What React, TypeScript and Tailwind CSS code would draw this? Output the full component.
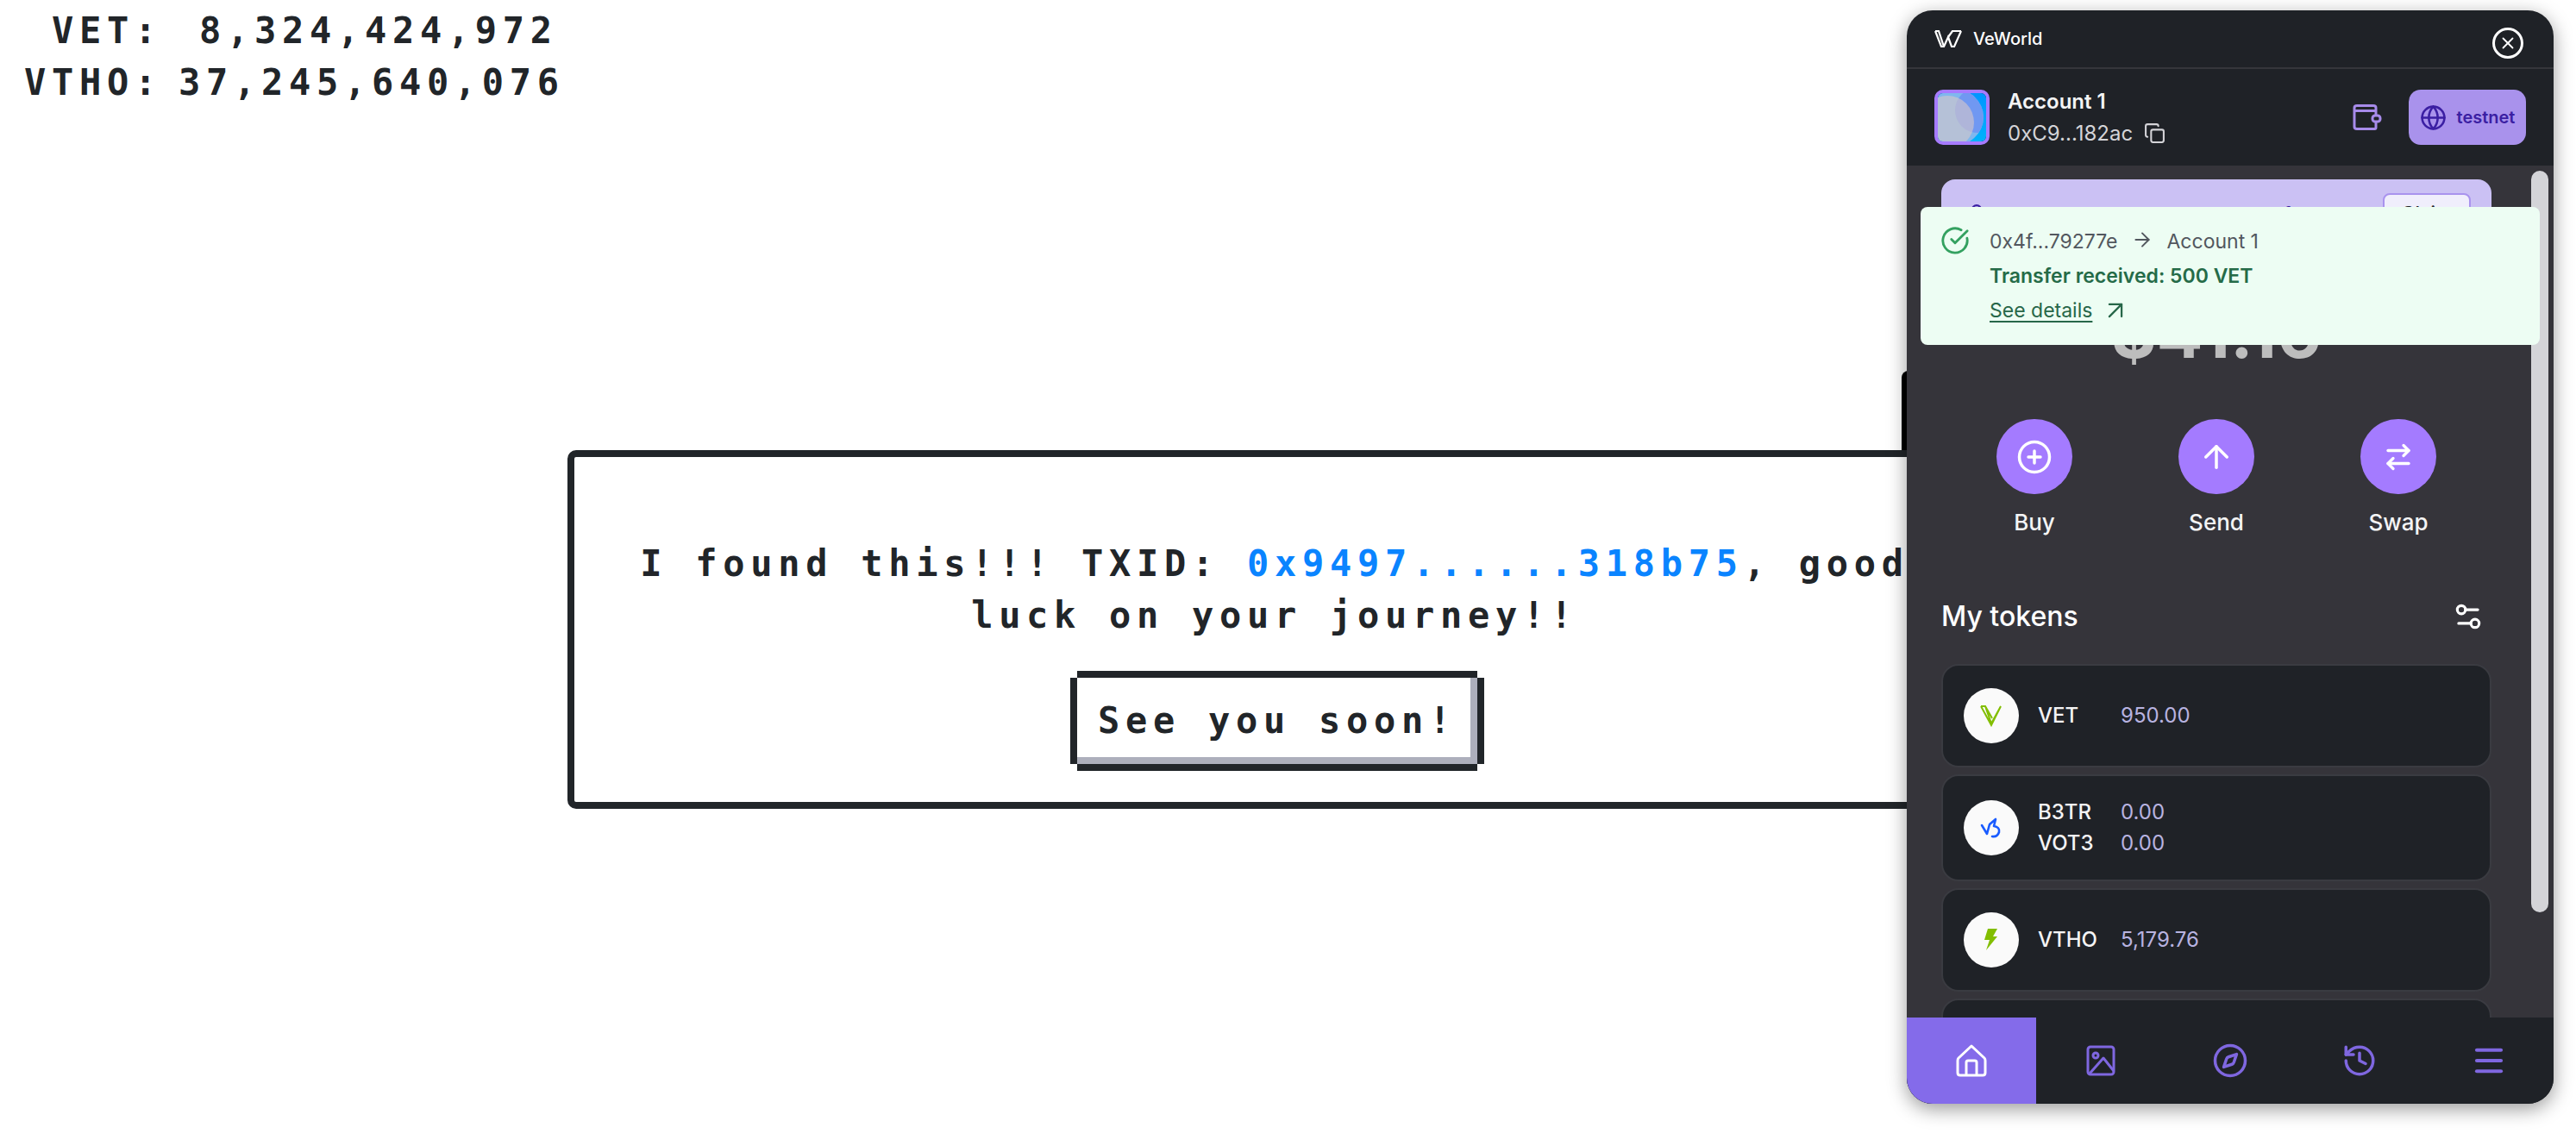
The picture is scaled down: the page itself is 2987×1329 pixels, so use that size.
import { ArrowRight, ArrowUp, ArrowUpRight, ArrowRightLeft, CircleCheckBig, CirclePlus, Compass, Copy, Globe, History, LockKeyhole, Menu, Settings2, X } from 'lucide-react';

const pixelText = "font-['DejaVu_Sans_Mono',monospace] font-bold text-[42px] leading-[60px] tracking-[6.7px] text-[#212529]";

function WeWorldLogo() {
  return (
    <svg viewBox="0 0 32 20" className="w-[32px] h-[20px]" fill="none" stroke="#fff" strokeWidth="2.2">
      <path d="M1 1 L8 19 L11 19 L16 8 L20 19 L23 19 L31 1" />
      <path d="M1 1 L5 1 L11 19 M16 8 L21 1 L31 1" />
    </svg>
  );
}

function Avatar() {
  return (
    <div className="w-[64px] h-[64px] rounded-[10px] border-4 border-[#a67bff] overflow-hidden shrink-0">
      <svg viewBox="0 0 56 56" className="w-full h-full">
        <defs>
          <linearGradient id="av" x1="0" y1="0" x2="0" y2="1">
            <stop offset="0" stopColor="#0095ff" />
            <stop offset="1" stopColor="#00b2fb" />
          </linearGradient>
          <clipPath id="big">
            <ellipse cx="16" cy="28" rx="37" ry="34" />
          </clipPath>
        </defs>
        <rect width="56" height="56" fill="url(#av)" />
        <ellipse cx="16" cy="28" rx="37" ry="34" fill="#7fb7ee" />
        <circle cx="46" cy="20" r="26" fill="#7098f2" clipPath="url(#big)" />
        <ellipse cx="11" cy="34" rx="31" ry="31" fill="#d9c8c8" fillOpacity="0.6" />
      </svg>
    </div>
  );
}

function WalletIcon() {
  return (
    <svg viewBox="0 0 34 30" className="w-[34px] h-[30px]" fill="none" stroke="#a78bea" strokeWidth="3" strokeLinejoin="round">
      <path d="M27 20 V27 Q27 28.5 25.5 28.5 H5 Q2 28.5 2 26 V4 Q2 1.5 5 1.5 H24 Q27 1.5 27 4 V13" />
      <path d="M2 7.5 H27" />
      <rect x="23" y="13" width="9" height="7" rx="3" />
    </svg>
  );
}

function HomeIcon() {
  return (
    <svg viewBox="0 0 36 38" className="w-[36px] h-[38px]" fill="none" stroke="#fff" strokeWidth="3" strokeLinejoin="round">
      <path d="M18 2 L33 16 Q34 17 34 19 V33 Q34 36 31 36 H5 Q2 36 2 33 V19 Q2 17 3 16 Z" />
      <path d="M12 36 V21 Q12 19 14 19 H22 Q24 19 24 21 V36" />
    </svg>
  );
}

function PictureIcon() {
  return (
    <svg viewBox="0 0 34 36" className="w-[34px] h-[36px]" fill="none" stroke="#7f67e0" strokeWidth="3" strokeLinejoin="round">
      <rect x="2" y="2" width="30" height="32" rx="3" />
      <circle cx="11" cy="12" r="3" />
      <path d="M4 33 L20 15 L32 30" />
    </svg>
  );
}

function VetIcon() {
  return (
    <svg viewBox="0 0 26 26" className="w-[26px] h-[26px]" fill="none" stroke="#82be00" strokeWidth="2">
      <path d="M1 2 L6 2 L13 22 L24 2 L13 24 L1 2 M6 2 L14 16" />
    </svg>
  );
}

function B3trIcon() {
  return (
    <svg viewBox="0 0 26 26" className="w-[26px] h-[26px]" fill="none" stroke="#1a5cff" strokeWidth="2.6" strokeLinecap="round" strokeLinejoin="round">
      <path d="M2 10 L8 20 L11 9 M11 9 L18 3 L16 11 Q23 12 22 18 Q20 24 14 23" />
    </svg>
  );
}

function BoltIcon() {
  return (
    <svg viewBox="0 0 16 26" className="w-[16px] h-[26px]">
      <path d="M4 0 H15 L10 9 H15 L2 25 L6 13 H0 Z" fill="#82be00" />
    </svg>
  );
}

function ActionButton({ label, children }: { label: string; children: React.ReactNode }) {
  return (
    <div className="w-[88px] flex flex-col items-center">
      <div className="w-[88px] h-[87px] rounded-full bg-[#a47bff] flex items-center justify-center text-white">
        {children}
      </div>
      <span className="mt-[17px] text-[26px] leading-[32px] font-medium text-[#f4f4f5] whitespace-nowrap">{label}</span>
    </div>
  );
}

function TokenCard({ icon, rows, tall }: { icon: React.ReactNode; rows: [string, string][]; tall?: boolean }) {
  return (
    <div className={`${tall ? 'h-[124px]' : 'h-[120px]'} shrink-0 rounded-[20px] border-2 border-[#3a3b41] bg-[#1f2227] pl-[24px] flex items-center gap-[22px]`}>
      <div className="w-[64px] h-[64px] rounded-full bg-[#fafafa] flex items-center justify-center">{icon}</div>
      <div className="flex flex-col gap-[4px]">
        {rows.map(([name, amount]) => (
          <div key={name} className="flex text-[24px] leading-[32px]">
            <span className="w-[96px] font-medium text-[#f4f4f5]">{name}</span>
            <span className="text-[#b8b3e0]">{amount}</span>
          </div>
        ))}
      </div>
    </div>
  );
}

function NavCell({ active, children }: { active?: boolean; children: React.ReactNode }) {
  return <div className={`flex-1 flex items-center justify-center ${active ? 'bg-[#846bea]' : ''}`}>{children}</div>;
}

function WalletPanel() {
  return (
    <div className="absolute left-[2211px] top-[12px] w-[750px] h-[1268px] rounded-[30px] overflow-hidden flex flex-col bg-[#1f2227] font-[Inter,sans-serif] shadow-[0_6px_22px_rgba(0,0,0,0.4)]">
      {/* title bar */}
      <div className="h-[68px] shrink-0 border-b-2 border-[#35363b] pl-[32px] pr-[35px] flex items-center">
        <WeWorldLogo />
        <span className="ml-[13px] text-[20px] font-medium text-white">VeWorld</span>
        <div className="ml-auto mt-[10px] w-[36px] h-[36px] rounded-full border-[3px] border-white flex items-center justify-center">
          <X size={22} color="#fff" strokeWidth={2} />
        </div>
      </div>

      {/* account row */}
      <div className="h-[112px] shrink-0 pl-[32px] pr-[32px] flex items-center">
        <Avatar />
        <div className="ml-[21px]">
          <div className="text-[24px] leading-[32px] font-semibold text-[#f4f4f5]">Account 1</div>
          <div className="mt-[5px] flex items-center text-[24px] leading-[32px] text-[#d4d4d8]">
            0xC9...182ac
            <Copy size={25} className="ml-[13px]" strokeWidth={2} />
          </div>
        </div>
        <div className="ml-auto mr-[31px]">
          <WalletIcon />
        </div>
        <div className="w-[136px] h-[64px] rounded-[14px] bg-[#a992ec] flex items-center justify-center gap-[12px] text-[#3b1fa3]">
          <Globe size={31} strokeWidth={2} />
          <span className="text-[20px] font-semibold">testnet</span>
        </div>
      </div>

      {/* scrolling content */}
      <div className="flex-1 min-h-0 relative bg-[#35343a] overflow-hidden pt-[16px] pl-[40px] pr-[72px]">
        <div className="h-[88px] rounded-[16px] bg-[#cbc1f4] pl-[28px] pr-[24px] pt-[16px] flex items-start">
          <LockKeyhole size={26} color="#3b1fa3" className="mt-[12px] shrink-0" />
          <span className="ml-[28px] mt-[8px] text-[22px] text-[#3b1fa3] font-medium whitespace-nowrap">You must back up your wallet for</span>
          <div className="ml-auto w-[102px] h-[48px] rounded-[8px] border-2 border-[#a993ee] bg-[#f0eefc] text-center text-[22px] leading-[42px] font-medium text-[#212529]">Claim</div>
        </div>

        <div className="mt-[46px] text-center text-[80px] leading-[88px] font-bold text-[#bdbdbd]">$41.16</div>

        <div className="mt-[56px] flex justify-between pl-[64px] pr-[64px]">
          <ActionButton label="Buy">
            <CirclePlus size={42} strokeWidth={2} />
          </ActionButton>
          <ActionButton label="Send">
            <ArrowUp size={42} strokeWidth={2} />
          </ActionButton>
          <ActionButton label="Swap">
            <ArrowRightLeft size={36} strokeWidth={2.2} />
          </ActionButton>
        </div>

        <div className="mt-[61px] h-[64px] flex items-center justify-between text-white pr-[8px]">
          <span className="text-[32px] font-medium">My tokens</span>
          <Settings2 size={38} strokeWidth={2} />
        </div>

        <div className="mt-[23px] flex flex-col gap-[8px]">
          <TokenCard icon={<VetIcon />} rows={[['VET', '950.00']]} />
          <TokenCard icon={<B3trIcon />} rows={[['B3TR', '0.00'], ['VOT3', '0.00']]} tall />
          <TokenCard icon={<BoltIcon />} rows={[['VTHO', '5,179.76']]} />
          <TokenCard icon={<VetIcon />} rows={[['USDC', '0.00']]} />
        </div>

        {/* scrollbar thumb */}
        <div className="absolute left-[724px] top-[6px] w-[20px] h-[860px] rounded-full bg-[#d4d4d8]" />

        {/* toast */}
        <div className="absolute left-[16px] top-[48px] w-[718px] h-[160px] rounded-[8px] bg-[#edfdf3] pl-[23px] pt-[20px] flex gap-[23px]">
          <CircleCheckBig size={34} color="#34a160" strokeWidth={2} className="mt-[2px] shrink-0" />
          <div className="flex flex-col text-[23px] leading-[40px]">
            <div className="flex items-center text-[#52575e]">
              0x4f...79277e
              <ArrowRight size={26} className="ml-[15px] mr-[16px] -mt-[5px]" strokeWidth={1.8} />
              Account 1
            </div>
            <div className="font-semibold text-[#256b48]">Transfer received: 500 VET</div>
            <div className="flex items-center text-[#276749]">
              <span className="underline underline-offset-4">See details</span>
              <ArrowUpRight size={34} className="ml-[10px]" strokeWidth={1.6} />
            </div>
          </div>
        </div>
      </div>

      {/* bottom nav */}
      <div className="h-[100px] shrink-0 flex bg-[#1f2227] text-[#7f67e0]">
        <NavCell active>
          <HomeIcon />
        </NavCell>
        <NavCell>
          <PictureIcon />
        </NavCell>
        <NavCell>
          <Compass size={42} strokeWidth={2} />
        </NavCell>
        <NavCell>
          <History size={42} strokeWidth={2} />
        </NavCell>
        <NavCell>
          <Menu size={42} strokeWidth={2.4} />
        </NavCell>
      </div>
    </div>
  );
}

export default function App() {
  return (
    <div className="relative w-[2987px] h-[1329px] bg-white overflow-hidden">
      {/* counters */}
      <div className={`pt-[6px] ${pixelText}`}>
        <div className="flex">
          <span className="w-[188px] text-right">VET:</span>
          <span className="ml-[43px]">8,324,424,972</span>
        </div>
        <div className="flex">
          <span className="w-[188px] text-right">VTHO:</span>
          <span className="ml-[19px]">37,245,640,076</span>
        </div>
      </div>

      {/* something dark sits behind the wallet, only its edge shows */}
      <div className="absolute left-[2205px] top-[430px] w-[30px] h-[96px] bg-black rounded-tl-[8px]" />

      {/* dialog */}
      <div className={`relative mt-[396px] ml-[658px] w-[1640px] h-[416px] rounded-[10px] border-8 border-[#212529] bg-white pt-[94px] text-center ${pixelText}`}>
        <p className="px-[40px]">
          I found this!!! TXID: <span className="text-[#0a84ff]">0x9497......318b75</span>, good luck on your journey!!
        </p>
        <div className="mt-[42px] ml-[583px] w-[464px] h-[100px] flex items-center justify-center whitespace-nowrap shadow-[inset_-8px_-8px_#adafbc,0_-8px_#212529,0_8px_#212529,-8px_0_#212529,8px_0_#212529]">
          See you soon!
        </div>
      </div>

      <WalletPanel />
    </div>
  );
}
